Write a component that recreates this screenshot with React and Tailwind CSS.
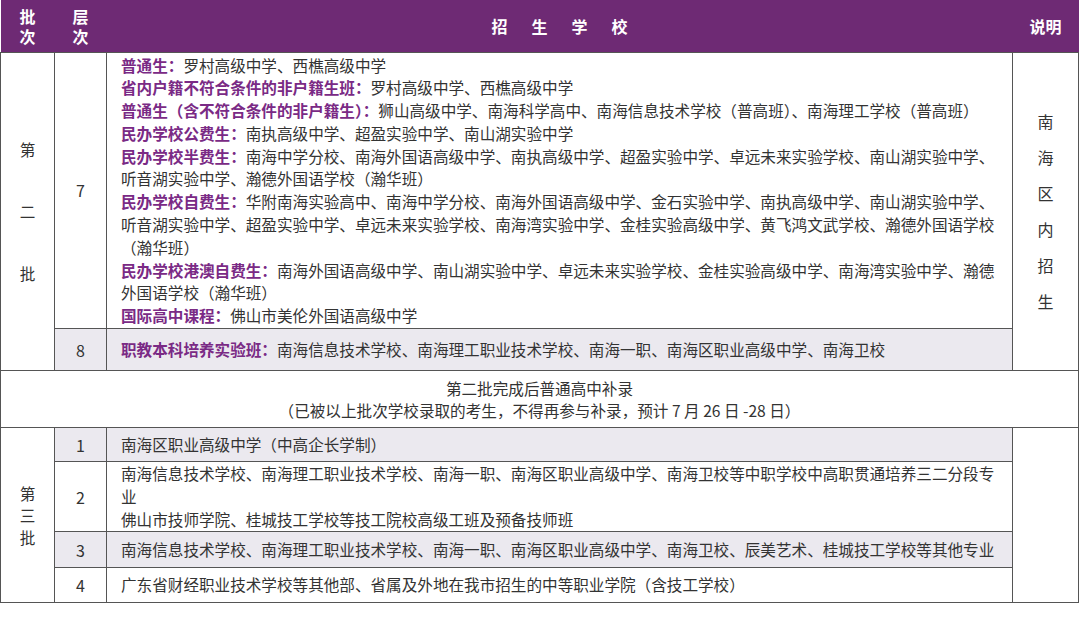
const P = ({ children }) => <span className="font-bold text-[#7a2a85]">{children}</span>;

export default function App() {
  const b = "border border-[#555]";
  return (
    <div className="w-[1080px] h-[621px] bg-white text-[#333] text-[15.6px]" style={{ fontFamily: '"Noto Sans CJK SC", "Noto Sans", sans-serif' }}>
      <table className="w-[1079px] border-collapse table-fixed">
        <colgroup>
          <col className="w-[54px]" /><col className="w-[52px]" /><col /><col className="w-[66px]" />
        </colgroup>
        <tbody>
          <tr className="h-[52px] bg-[#6e2a74] text-white font-bold text-[16px] leading-[20px]">
            <td className="text-center">批<br />次</td>
            <td className="text-center">层<br />次</td>
            <td className="text-center tracking-[1.5em] pl-[1.5em]">招生学校</td>
            <td className="text-center">说明</td>
          </tr>
          <tr>
            <td rowSpan={2} className={`${b} text-center leading-[62px]`}>第<br />二<br />批</td>
            <td className={`${b} text-center text-[16px]`}>7</td>
            <td className={`${b} pl-[14px] pr-[8px] py-[1px] leading-[22.8px]`}>
              <div><P>普通生：</P>罗村高级中学、西樵高级中学</div>
              <div><P>省内户籍不符合条件的非户籍生班：</P>罗村高级中学、西樵高级中学</div>
              <div><P>普通生（含不符合条件的非户籍生）：</P>狮山高级中学、南海科学高中、南海信息技术学校（普高班）、南海理工学校（普高班）</div>
              <div><P>民办学校公费生：</P>南执高级中学、超盈实验中学、南山湖实验中学</div>
              <div><P>民办学校半费生：</P>南海中学分校、南海外国语高级中学、南执高级中学、超盈实验中学、卓远未来实验学校、南山湖实验中学、听音湖实验中学、瀚德外国语学校（瀚华班）</div>
              <div><P>民办学校自费生：</P>华附南海实验高中、南海中学分校、南海外国语高级中学、金石实验中学、南执高级中学、南山湖实验中学、听音湖实验中学、超盈实验中学、卓远未来实验学校、南海湾实验中学、金桂实验高级中学、黄飞鸿文武学校、瀚德外国语学校（瀚华班）</div>
              <div><P>民办学校港澳自费生：</P>南海外国语高级中学、南山湖实验中学、卓远未来实验学校、金桂实验高级中学、南海湾实验中学、瀚德外国语学校（瀚华班）</div>
              <div><P>国际高中课程：</P>佛山市美伦外国语高级中学</div>
            </td>
            <td rowSpan={2} className={`${b} text-center leading-[36px] text-[16px]`}>南<br />海<br />区<br />内<br />招<br />生</td>
          </tr>
          <tr className="h-[42px] bg-[#ebe9ef]">
            <td className={`${b} text-center text-[16px]`}>8</td>
            <td className={`${b} px-[14px]`}><P>职教本科培养实验班：</P>南海信息技术学校、南海理工职业技术学校、南海一职、南海区职业高级中学、南海卫校</td>
          </tr>
          <tr className="h-[57px]">
            <td colSpan={4} className={`${b} text-center leading-[22px]`}>第二批完成后普通高中补录<br />（已被以上批次学校录取的考生，不得再参与补录，预计 7 月 26 日 -28 日）</td>
          </tr>
          <tr className="h-[34px]">
            <td rowSpan={4} className={`${b} text-center leading-[22px]`}>第<br />三<br />批</td>
            <td className={`${b} text-center text-[16px] bg-[#ebe9ef]`}>1</td>
            <td className={`${b} px-[14px] bg-[#ebe9ef]`}>南海区职业高级中学（中高企长学制）</td>
            <td rowSpan={4} className={b}></td>
          </tr>
          <tr className="h-[54px]">
            <td className={`${b} text-center text-[16px]`}>2</td>
            <td className={`${b} px-[14px] leading-[23px]`}>南海信息技术学校、南海理工职业技术学校、南海一职、南海区职业高级中学、南海卫校等中职学校中高职贯通培养三二分段专业<br />佛山市技师学院、桂城技工学校等技工院校高级工班及预备技师班</td>
          </tr>
          <tr className="h-[36px]">
            <td className={`${b} text-center text-[16px] bg-[#ebe9ef]`}>3</td>
            <td className={`${b} px-[14px] bg-[#ebe9ef]`}>南海信息技术学校、南海理工职业技术学校、南海一职、南海区职业高级中学、南海卫校、辰美艺术、桂城技工学校等其他专业</td>
          </tr>
          <tr className="h-[35px]">
            <td className={`${b} text-center text-[16px]`}>4</td>
            <td className={`${b} px-[14px]`}>广东省财经职业技术学校等其他部、省属及外地在我市招生的中等职业学院（含技工学校）</td>
          </tr>
        </tbody>
      </table>
      <div className="mt-[14px] text-[14px] text-[#333]">说明：招生学校的报考资格、户籍限制、收费标准、学校代码等情况请查阅《2026 年南海区招生计划册》及有关文件要求。</div>
    </div>
  );
}
